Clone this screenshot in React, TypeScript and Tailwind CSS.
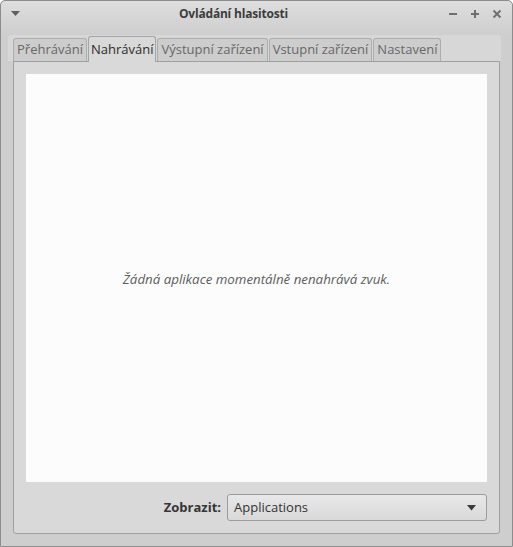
import React from 'react';

const tabs = ['Přehrávání', 'Nahrávání', 'Výstupní zařízení', 'Vstupní zařízení', 'Nastavení'];

function TitleButtons() {
  return (
    <div className="absolute right-[10px] top-[8px] flex items-center gap-[12px] text-[#6f6f6f]">
      <svg width="10" height="10" viewBox="0 0 10 10">
        <rect x="1" y="4" width="8" height="2" fill="currentColor" />
      </svg>
      <svg width="10" height="10" viewBox="0 0 10 10">
        <rect x="1" y="4" width="8" height="2" fill="currentColor" />
        <rect x="4" y="1" width="2" height="8" fill="currentColor" />
      </svg>
      <svg width="10" height="10" viewBox="0 0 10 10">
        <path d="M1.5 1.5 L8.5 8.5 M8.5 1.5 L1.5 8.5" stroke="currentColor" strokeWidth="1.8" />
      </svg>
    </div>
  );
}

export default function App() {
  return (
    <div
      className="w-[513px] h-[547px] flex flex-col border border-[#8c8c8c] rounded-t-[5px] bg-[#cecece] text-[13px]"
      style={{ fontFamily: '"Open Sans", "Noto Sans", sans-serif' }}
    >
      {/* title bar */}
      <div className="relative h-[34px] shrink-0 rounded-t-[5px] bg-gradient-to-b from-[#dedede] to-[#cecece]">
        <svg className="absolute left-[10px] top-[10px]" width="9" height="6" viewBox="0 0 9 6">
          <path d="M0 0 H9 L4.5 5 Z" fill="#5f5f5f" />
        </svg>
        <div className="absolute left-[178px] top-[4px] text-[12px] tracking-[-0.2px] font-bold text-[#3c3c3c]">
          Ovládání hlasitosti
        </div>
        <TitleButtons />
      </div>

      {/* tab strip */}
      <div className="ml-[7px] w-[493px] h-[26px] shrink-0 rounded-t-[3px] bg-[#d7d7d7] flex items-end gap-[1px] pl-[5px]">
        {tabs.map((t, i) =>
          i === 1 ? (
            <div
              key={t}
              className="h-[26px] px-[2px] border border-b-0 border-[#a5a5a5] rounded-t-[3px] bg-[#d9d9d9] text-[#2c2c2c] flex items-center relative top-[1px]"
            >
              {t}
            </div>
          ) : (
            <div
              key={t}
              className="h-[23px] px-[3px] border border-b-0 border-[#adadad] rounded-t-[3px] bg-[#cdcdcd] text-[#686868] flex items-center"
            >
              {t}
            </div>
          )
        )}
      </div>

      {/* notebook page */}
      <div className="ml-[12px] w-[487px] h-[473px] shrink-0 border border-[#9f9f9f] rounded-b-[3px] bg-[#d9d9d9] p-[12px] flex flex-col gap-[12px]">
        <div className="h-[408px] bg-[#fcfcfc] flex items-center justify-center pt-[3px]">
          <span className="italic text-[13.3px] text-[#5c5c5c]">Žádná aplikace momentálně nenahrává zvuk.</span>
        </div>
        <div className="flex items-center justify-end gap-[6px]">
          <span className="font-bold text-[#353535]">Zobrazit:</span>
          <div className="w-[260px] h-[27px] border border-[#9c9c9c] rounded-[3px] bg-gradient-to-b from-[#e8e8e8] to-[#d9d9d9] flex items-center justify-between pl-[6px] pr-[10px]">
            <span className="text-[#333333]">Applications</span>
            <svg width="9" height="6" viewBox="0 0 9 6">
              <path d="M0 0 H9 L4.5 5.5 Z" fill="#3a3a3a" />
            </svg>
          </div>
        </div>
      </div>
    </div>
  );
}
